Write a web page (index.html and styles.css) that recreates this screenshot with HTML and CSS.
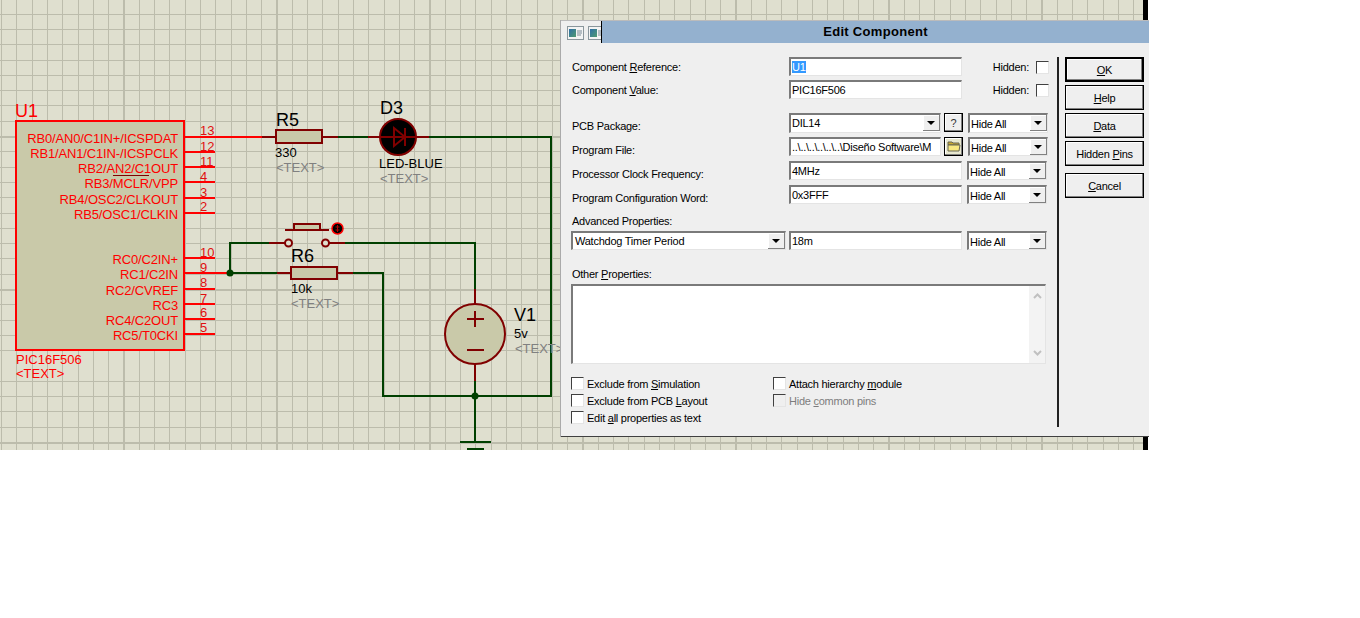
FILE: index.html
```html
<!DOCTYPE html>
<html lang="en">
<head>
  <meta charset="UTF-8">
  <title>Edit Component</title>
  <link rel="stylesheet" href="styles.css">
</head>
<body>
  <div class="canvas">
    <!-- Schematic -->
    <svg class="schematic" width="1143" height="450" viewBox="0 0 1143 450">
      <!-- U1 -->
      <rect class="chip" x="16" y="121" width="168" height="229"/>
      <path class="pin" d="M184 137H262M184 152H215M184 167H215M184 182H215M184 198H215M184 213H215M184 258H215M184 273H230M184 289H215M184 304H215M184 319H215M184 334H215"/>
      <text class="big red" x="15" y="117">U1</text>
      <g class="pinlabels">
        <text x="178" y="143">RB0/AN0/C1IN+/ICSPDAT</text>
        <text x="178" y="158">RB1/AN1/C1IN-/ICSPCLK</text>
        <text x="178" y="173">RB2/AN2/C1OUT</text>
        <text x="178" y="188">RB3/MCLR/VPP</text>
        <text x="178" y="204">RB4/OSC2/CLKOUT</text>
        <text x="178" y="219">RB5/OSC1/CLKIN</text>
        <text x="178" y="264">RC0/C2IN+</text>
        <text x="178" y="279">RC1/C2IN</text>
        <text x="178" y="295">RC2/CVREF</text>
        <text x="178" y="310">RC3</text>
        <text x="178" y="325">RC4/C2OUT</text>
        <text x="178" y="340">RC5/T0CKI</text>
      </g>
      <path class="overbar" d="M113 175.5H149"/>
      <g class="pinnums">
        <text x="200" y="135">13</text>
        <text x="200" y="151">12</text>
        <text x="200" y="166">11</text>
        <text x="200" y="181">4</text>
        <text x="200" y="197">3</text>
        <text x="200" y="211">2</text>
        <text x="200" y="257">10</text>
        <text x="200" y="272">9</text>
        <text x="200" y="287">8</text>
        <text x="200" y="303">7</text>
        <text x="200" y="317">6</text>
        <text x="200" y="332">5</text>
      </g>
      <text class="small red" x="16" y="364">PIC16F506</text>
      <text class="small red" x="16" y="378">&lt;TEXT&gt;</text>

      <!-- Wires -->
      <path class="wire" d="M338 137H368M429 137H551V396H383V273H353M230 273H277M230 273V243H269M345 243H475V289M475 380V442"/>
      <path class="wire" d="M460 442H491M467 449H484"/>
      <circle class="node" cx="230" cy="273" r="3.5"/>
      <circle class="node" cx="475" cy="396" r="3.5"/>

      <!-- R5 -->
      <path class="part" d="M262 137H276M322 137H338"/>
      <rect class="body" x="276" y="130" width="46" height="13"/>
      <text class="mid" x="276" y="126">R5</text>
      <text class="small" x="275" y="157">330</text>
      <text class="small grey" x="276" y="172">&lt;TEXT&gt;</text>

      <!-- D3 -->
      <path class="part" d="M368 137H380M417 137H429"/>
      <circle class="led" cx="398" cy="137" r="18"/>
      <path class="part" d="M380 137H417M394 128V146L405 137ZM405 128V146"/>
      <text class="mid" x="380" y="114">D3</text>
      <text class="small" x="379" y="168">LED-BLUE</text>
      <text class="small grey" x="380" y="183">&lt;TEXT&gt;</text>

      <!-- Button -->
      <path class="part" d="M269 243H285M329 243H345M285 230H329"/>
      <rect class="body" x="294" y="224" width="26" height="6"/>
      <circle class="contact" cx="288.500" cy="243" r="3.500"/>
      <circle class="contact" cx="325.500" cy="243" r="3.500"/>
      <circle class="probe" cx="337.500" cy="228.500" r="5.500"/>
      <path class="probe-mark" d="M337.500 225V232M335.500 227H339.500M335.500 230H339.500"/>

      <!-- R6 -->
      <path class="part" d="M277 273H291M337 273H353"/>
      <rect class="body" x="291" y="267" width="46" height="12"/>
      <text class="mid" x="291" y="262">R6</text>
      <text class="small" x="291" y="293">10k</text>
      <text class="small grey" x="291" y="308">&lt;TEXT&gt;</text>

      <!-- V1 -->
      <path class="part" d="M475 289V305M475 364V381"/>
      <circle class="body" cx="475" cy="334" r="30"/>
      <path class="part" d="M467 319H484M467 350H484M475 311V327"/>
      <text class="mid" x="514" y="321">V1</text>
      <text class="small" x="514" y="338">5v</text>
      <text class="small grey" x="515" y="353">&lt;TEXT&gt;</text>
    </svg>

    <!-- Dialog window -->
    <div class="dialog">
      <div class="titlebar">
        <div class="tabs">
          <svg class="tab" width="17" height="14" viewBox="0 0 17 14">
            <defs>
              <linearGradient id="tabfill" x1="0" y1="0" x2="1" y2="1">
                <stop offset="0" stop-color="#2f6fa8"/>
                <stop offset="1" stop-color="#4f9a70"/>
              </linearGradient>
            </defs>
            <rect x=".5" y=".5" width="16" height="13" fill="#f4f4f4" stroke="#8a969c"/>
            <rect x="2" y="3" width="7" height="8" fill="url(#tabfill)"/>
            <path d="M10 5h5M10 7h5M10 9h4" stroke="#7a8a96"/>
          </svg>
          <svg class="tab" width="13" height="14" viewBox="0 0 13 14">
            <rect x=".5" y=".5" width="16" height="13" fill="#f4f4f4" stroke="#8a969c"/>
            <rect x="2" y="3" width="7" height="8" fill="url(#tabfill)"/>
            <path d="M10 5h3M10 7h3M10 9h3" stroke="#7a8a96"/>
          </svg>
        </div>
        <div class="title">Edit Component</div>
      </div>
      <div class="dialog-body">
        <div class="main">
          <div class="row">
            <div class="label">Component <u>R</u>eference:</div>
            <div class="field wide"><span class="selected">U1</span></div>
            <div class="hidden-opt"><span>Hidden:</span><span class="check"></span></div>
          </div>
          <div class="row row-tight">
            <div class="label">Component <u>V</u>alue:</div>
            <div class="field wide">PIC16F506</div>
            <div class="hidden-opt"><span>Hidden:</span><span class="check"></span></div>
          </div>
          <div class="row row-pcb">
            <div class="label low">PCB Package:</div>
            <div class="field pkg">DIL14<span class="arrow"></span></div>
            <div class="mini">?</div>
            <div class="field combo">Hide All<span class="arrow"></span></div>
          </div>
          <div class="row row-tight">
            <div class="label low">Program File:</div>
            <div class="field pkg">..\..\..\..\..\..\Diseño Software\M</div>
            <div class="mini dark">
              <svg width="14" height="13" viewBox="0 0 14 13">
                <path d="M1 2h4l1 1h6v2H1z" fill="#c8a830" stroke="#665"/>
                <path d="M1 11V5h12l-1 6z" fill="#f8e880" stroke="#665"/>
              </svg>
            </div>
            <div class="field combo">Hide All<span class="arrow"></span></div>
          </div>
          <div class="row row-std">
            <div class="label low">Processor Clock Frequency:</div>
            <div class="field wide">4MHz</div>
            <div class="field combo">Hide All<span class="arrow"></span></div>
          </div>
          <div class="row row-std">
            <div class="label low">Program Configuration Word:</div>
            <div class="field wide">0x3FFF</div>
            <div class="field combo">Hide All<span class="arrow"></span></div>
          </div>
          <div class="caption caption-adv">Advanced Properties:</div>
          <div class="row row-after-caption">
            <div class="field adv">Watchdog Timer Period<span class="arrow"></span></div>
            <div class="field wide">18m</div>
            <div class="field combo">Hide All<span class="arrow"></span></div>
          </div>
          <div class="caption caption-other">Other <u>P</u>roperties:</div>
          <div class="textarea">
            <div class="scroll">
              <svg width="9" height="6" viewBox="0 0 9 6"><path d="M1 5L4.500 1.500L8 5"/></svg>
              <svg width="9" height="6" viewBox="0 0 9 6"><path d="M1 1L4.500 4.500L8 1"/></svg>
            </div>
          </div>
          <div class="checks">
            <div class="opt"><span class="check"></span><span>Exclude from <u>S</u>imulation</span></div>
            <div class="opt"><span class="check"></span><span>Attach hierarchy <u>m</u>odule</span></div>
            <div class="opt"><span class="check"></span><span>Exclude from PCB <u>L</u>ayout</span></div>
            <div class="opt off"><span class="check"></span><span>Hide <u>c</u>ommon pins</span></div>
            <div class="opt"><span class="check"></span><span>Edit <u>a</u>ll properties as text</span></div>
          </div>
        </div>
        <div class="divider"></div>
        <div class="buttons">
          <div class="button default"><u>O</u>K</div>
          <div class="button"><u>H</u>elp</div>
          <div class="button"><u>D</u>ata</div>
          <div class="button">Hidden <u>P</u>ins</div>
          <div class="button cancel"><u>C</u>ancel</div>
        </div>
      </div>
    </div>
  </div>
</body>
</html>
```
FILE: styles.css
```css
body {
  margin: 0;
  background-color: #fff;
  font-family: "Liberation Sans", Arial, sans-serif;
}
.canvas {
  position: relative;
  width: 1143px;
  height: 450px;
  border-right: 5px solid #000;
  background-color: #dfdfcf;
  background-image:
    repeating-linear-gradient(90deg, transparent 0 123px, #bcbcac 123px 125px, transparent 125px 153px),
    repeating-linear-gradient(180deg, transparent 0 136px, #bcbcac 136px 138px, transparent 138px 153px),
    repeating-linear-gradient(90deg, transparent 0 1px, #bcbcac 1px 2px, transparent 2px 15.3px),
    repeating-linear-gradient(180deg, transparent 0 13.6px, #bcbcac 13.6px 14.6px, transparent 14.6px 15.3px);
}
.schematic {
  display: block;
}

/* Schematic parts */
.chip { fill: #c9c9a9; stroke: #f00; stroke-width: 2; shape-rendering: crispEdges; }
.pin { fill: none; stroke: #f00; stroke-width: 2; shape-rendering: crispEdges; }
.wire { fill: none; stroke: #004000; stroke-width: 2; shape-rendering: crispEdges; }
.part { fill: none; stroke: #800000; stroke-width: 2; }
.body { fill: #c9c9a9; stroke: #800000; stroke-width: 2; }
.led { fill: #000; stroke: #800000; stroke-width: 2; }
.node { fill: #004000; }
.contact { fill: #dfdfcf; stroke: #800000; stroke-width: 2; }
.probe { fill: #000; stroke: #f00; stroke-width: 1.5; }
.probe-mark { fill: none; stroke: #b00000; stroke-width: 1; }
.overbar { stroke: #800000; stroke-width: 1; }
.schematic text { font-size: 13px; }
.pinlabels text { fill: #f00; text-anchor: end; letter-spacing: -0.15px; }
.pinnums text { fill: #e01010; }
.schematic .big { font-size: 18px; }
.schematic .mid { font-size: 18px; fill: #000; }
.small { fill: #000; }
.schematic .red { fill: #f00; }
.schematic .grey { fill: #808080; }

/* Dialog */
.dialog {
  position: absolute;
  left: 561px;
  top: 20px;
  width: 588px;
  height: 415px;
  background-color: #efefef;
  border-top: 1px solid #bbb;
  border-bottom: 1px solid #404040;
  box-shadow: -1px 0 0 #aaa;
  font-size: 11px;
  letter-spacing: -0.25px;
  color: #000;
}
.titlebar {
  display: flex;
  height: 22px;
}
.tabs {
  display: flex;
  align-items: center;
  gap: 4px;
  width: 34px;
  padding-left: 6px;
  padding-top: 1px;
  border-right: 1px solid #000;
}
.tab { display: block; }
.title {
  flex: 1;
  background-color: #94b1cf;
  text-align: center;
  font-size: 13px;
  font-weight: bold;
  letter-spacing: 0.3px;
  line-height: 22px;
}
.dialog-body {
  display: flex;
  padding: 14px 0 0 10px;
}
.main {
  flex: none;
  width: 476px;
}
.row {
  display: flex;
  align-items: flex-start;
  height: 19px;
}
.row > * { flex: none; }
.row-tight { margin-top: 4px; }
.row-pcb { margin-top: 14px; height: 20px; }
.row-std { margin-top: 5px; }
.row-after-caption { margin-top: 3px; }
.label {
  width: 218px;
  padding-left: 1px;
  box-sizing: border-box;
  line-height: 21px;
}
.label.low { padding-top: 3px; }
.field {
  position: relative;
  box-sizing: border-box;
  height: 19px;
  padding-left: 1px;
  background-color: #fff;
  border-top: 2px solid #7a7a7a;
  border-left: 2px solid #7a7a7a;
  border-right: 1px solid #e4e4e4;
  border-bottom: 1px solid #e4e4e4;
  line-height: 17px;
  white-space: nowrap;
}
.wide { width: 173px; }
.pkg { width: 152px; }
.adv { width: 215px; margin-right: 3px; padding-left: 2px; }
.combo { width: 80px; margin-left: 5px; line-height: 19px; }
.row-pcb .field { height: 20px; }
.selected {
  background-color: #3399ff;
  color: #fff;
}
.arrow {
  position: absolute;
  top: 0;
  right: 0;
  box-sizing: border-box;
  width: 17px;
  height: 16px;
  background-color: #efefef;
  border-right: 1px solid #808080;
  border-bottom: 1px solid #808080;
  box-shadow: inset 1px 1px 0 #fff;
}
.arrow::after {
  content: "";
  position: absolute;
  left: 4px;
  top: 6px;
  border-top: 4px solid #000;
  border-left: 4px solid transparent;
  border-right: 4px solid transparent;
}
.mini {
  box-sizing: border-box;
  width: 19px;
  height: 19px;
  margin-left: 3px;
  display: flex;
  align-items: center;
  justify-content: center;
  background-color: #efefef;
  border: 1px solid #000;
  box-shadow: inset -1px -1px 0 #808080, inset 1px 1px 0 #fff;
  font-size: 11px;
  color: #333;
}
.mini.dark {
  margin-left: 3px;
  background-color: #e8e8d0;
}
.hidden-opt {
  display: flex;
  align-items: flex-start;
  justify-content: flex-end;
  width: 87px;
  line-height: 21px;
  gap: 7px;
}
.hidden-opt .check { margin-top: 4px; }
.check {
  display: inline-block;
  box-sizing: border-box;
  flex: none;
  width: 13px;
  height: 13px;
  background-color: #fff;
  border-top: 1px solid #404040;
  border-left: 1px solid #404040;
  border-right: 1px solid #e4e4e4;
  border-bottom: 1px solid #e4e4e4;
}
.caption {
  height: 14px;
  line-height: 14px;
  padding-left: 1px;
}
.caption-adv { margin-top: 10px; }
.caption-other { margin-top: 17px; }
.textarea {
  position: relative;
  box-sizing: border-box;
  width: 475px;
  height: 80px;
  margin-top: 3px;
  background-color: #fff;
  border-top: 2px solid #7a7a7a;
  border-left: 2px solid #7a7a7a;
  border-right: 1px solid #e4e4e4;
  border-bottom: 1px solid #e4e4e4;
}
.scroll {
  position: absolute;
  top: 0;
  right: 0;
  bottom: 0;
  width: 16px;
  box-sizing: border-box;
  padding: 7px 0;
  display: flex;
  flex-direction: column;
  justify-content: space-between;
  align-items: center;
  background-color: #f3f3f3;
}
.scroll path {
  fill: none;
  stroke: #c0c0c0;
  stroke-width: 2;
}
.checks {
  display: grid;
  grid-template-columns: 202px 1fr;
  grid-auto-rows: 17px;
  margin-top: 11px;
}
.opt {
  display: flex;
  align-items: center;
  gap: 3px;
  white-space: nowrap;
}
.opt.off { color: #7d7d7d; }
.opt.off .check { background-color: #efefef; }
.divider {
  flex: none;
  width: 2px;
  height: 370px;
  margin-left: 10px;
  background-color: #222;
}
.buttons {
  display: flex;
  flex-direction: column;
  gap: 3px;
  width: 79px;
  margin-left: 6px;
}
.button {
  box-sizing: border-box;
  height: 25px;
  background-color: #efefef;
  border: 1px solid #000;
  box-shadow: inset -1px -1px 0 #808080, inset 1px 1px 0 #fff;
  text-align: center;
  line-height: 24px;
}
.button.default {
  border-width: 2px;
  line-height: 22px;
}
.button.cancel { margin-top: 4px; }
```
